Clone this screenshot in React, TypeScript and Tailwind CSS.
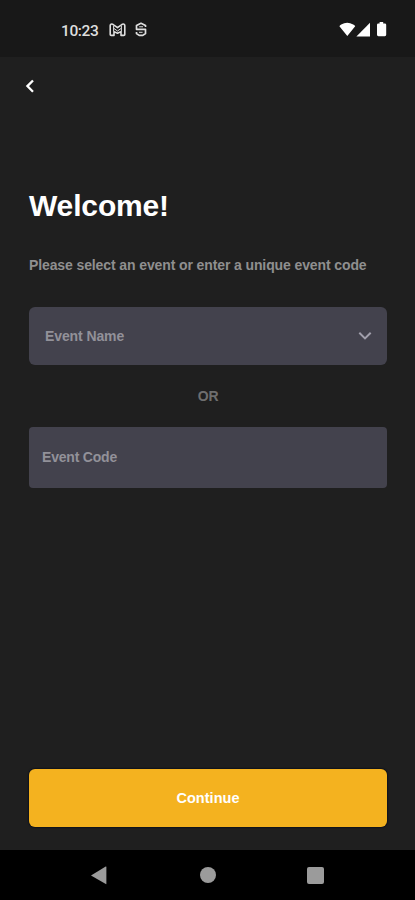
import React from "react";

function StatusBar() {
  return (
    <header className="flex h-[57px] items-start bg-[#181818] pl-[61px] pr-[28px] pt-[20px] text-[#dedede]">
      <span className="w-[48px] pt-px font-['Roboto',sans-serif] text-[15.5px] leading-[20px] font-medium tracking-[-0.4px]">10:23</span>
      <svg className="mt-[3px] h-[14px] w-[17px]" viewBox="0 0 17 14" fill="none" stroke="currentColor" strokeWidth="1.6" strokeLinejoin="round">
        <path d="M5 12.4H2.2Q1.2 12.4 1.2 11.4V2.8Q1.2 1 2.8 1Q3.7 1 4.6 1.8L8.5 4.7L12.4 1.8Q13.3 1 14.2 1Q15.8 1 15.8 2.8V11.4Q15.8 12.4 14.8 12.4H12V8.6L8.5 10.3L5 8.6Z" />
        <path d="M4.6 2.8V8.4M12.4 2.8V8.4M4.6 5.2L8.5 8L12.4 5.2" strokeWidth="1" />
      </svg>
      <svg className="mt-[2px] ml-[9px] h-[16px] w-[12px]" viewBox="0 0 12 16" fill="none" stroke="currentColor" strokeWidth="1.7" strokeLinejoin="round">
        <path d="M10.5 5V3.6L6 1.3L1.5 3.6V7.3H10.5V11.5L7.8 13.4H4.2L1.5 11.5V10" />
        <path d="M4.2 4.8H8M4 10.3H7.6" strokeWidth="1" />
      </svg>
      <div className="ml-auto flex items-start pt-[1px] text-white">
        <svg className="h-[16px] w-[48px]" viewBox="0 0 48 16" fill="currentColor">
          <path d="M0.4 5.2Q1 4.1 2.2 3.4Q8.2 0 14.2 3.4Q15.7 4.1 16.2 5.2L8.3 15Z" />
          <path d="M31 1.8V15.4H17.4Z" />
          <path d="M40.6 1H44.2V2.4H45.8Q47.2 2.4 47.2 3.8V13.8Q47.2 15.2 45.8 15.2H39.4Q38 15.2 38 13.8V3.8Q38 2.4 39.4 2.4H40.6Z" />
        </svg>
      </div>
    </header>
  );
}

function SystemNavigation() {
  return (
    <nav className="flex h-[50px] shrink-0 items-center justify-between bg-black pr-[91px] pl-[90px] text-[#9b9b9b]">
      <svg className="h-[20px] w-[18px]" viewBox="0 0 18 20" fill="currentColor"><path d="M1 10.4L15.7 1.6Q16.4 1.2 16.4 2V18.8Q16.4 19.4 15.8 19.1Z" /></svg>
      <span className="size-4 rounded-full bg-[#9b9b9b]" />
      <span className="mt-px h-[17px] w-[17px] rounded-[2px] bg-[#9b9b9b]" />
    </nav>
  );
}

export default function App() {
  return (
    <div className="flex h-[900px] w-[415px] flex-col overflow-hidden bg-[#1f1f1f] font-['Liberation_Sans',Arial,sans-serif] font-bold">
      <StatusBar />
      <main className="flex flex-1 flex-col pr-[28px] pl-[29px]">
        <button aria-label="Back" className="mt-[22px] -ml-[5px] h-[16px] w-[12px] text-white">
          <svg className="h-[16px] w-[12px]" viewBox="0 0 12 16" fill="none" stroke="currentColor" strokeWidth="2.3"><path d="M9 1.5L3.4 7.1L9 12.7" /></svg>
        </button>
        <h1 className="mt-[93px] text-[30px] leading-[36px] tracking-[-0.15px] text-white">Welcome!</h1>
        <p className="mt-[31px] text-[14px] leading-[20px] tracking-[-0.11px] whitespace-nowrap text-[#8f8f8f]">Please select an event or enter a unique event code</p>
        <button className="mt-[32px] flex h-[58px] items-center justify-between rounded-[6px] bg-[#43424d] pr-[15px] pl-4 text-left text-[14px] tracking-[-0.1px] text-[#929199]">
          <span>Event Name</span>
          <svg className="h-[10px] w-[14px]" viewBox="0 0 14 10" fill="none" stroke="#a19fac" strokeWidth="2"><path d="M1.3 1.8L7 7.4L12.7 1.8" /></svg>
        </button>
        <div className="mt-[21px] h-5 text-center text-[14px] leading-[20px] tracking-[-0.2px] text-[#6e6e6e]">OR</div>
        <label className="mt-[21px] flex h-[61px] items-center rounded-[4px] bg-[#43424d] pl-[13px] text-[14px] tracking-[-0.2px] text-[#929199]">
          <span>Event Code</span>
        </label>
        <button className="mt-auto mb-[23px] h-[58px] rounded-[6px] bg-[#f4b21f] pt-[2px] text-[14.5px] tracking-[0.05px] text-white shadow-[0_0_1px_1px_#10131b]">Continue</button>
      </main>
      <SystemNavigation />
    </div>
  );
}
